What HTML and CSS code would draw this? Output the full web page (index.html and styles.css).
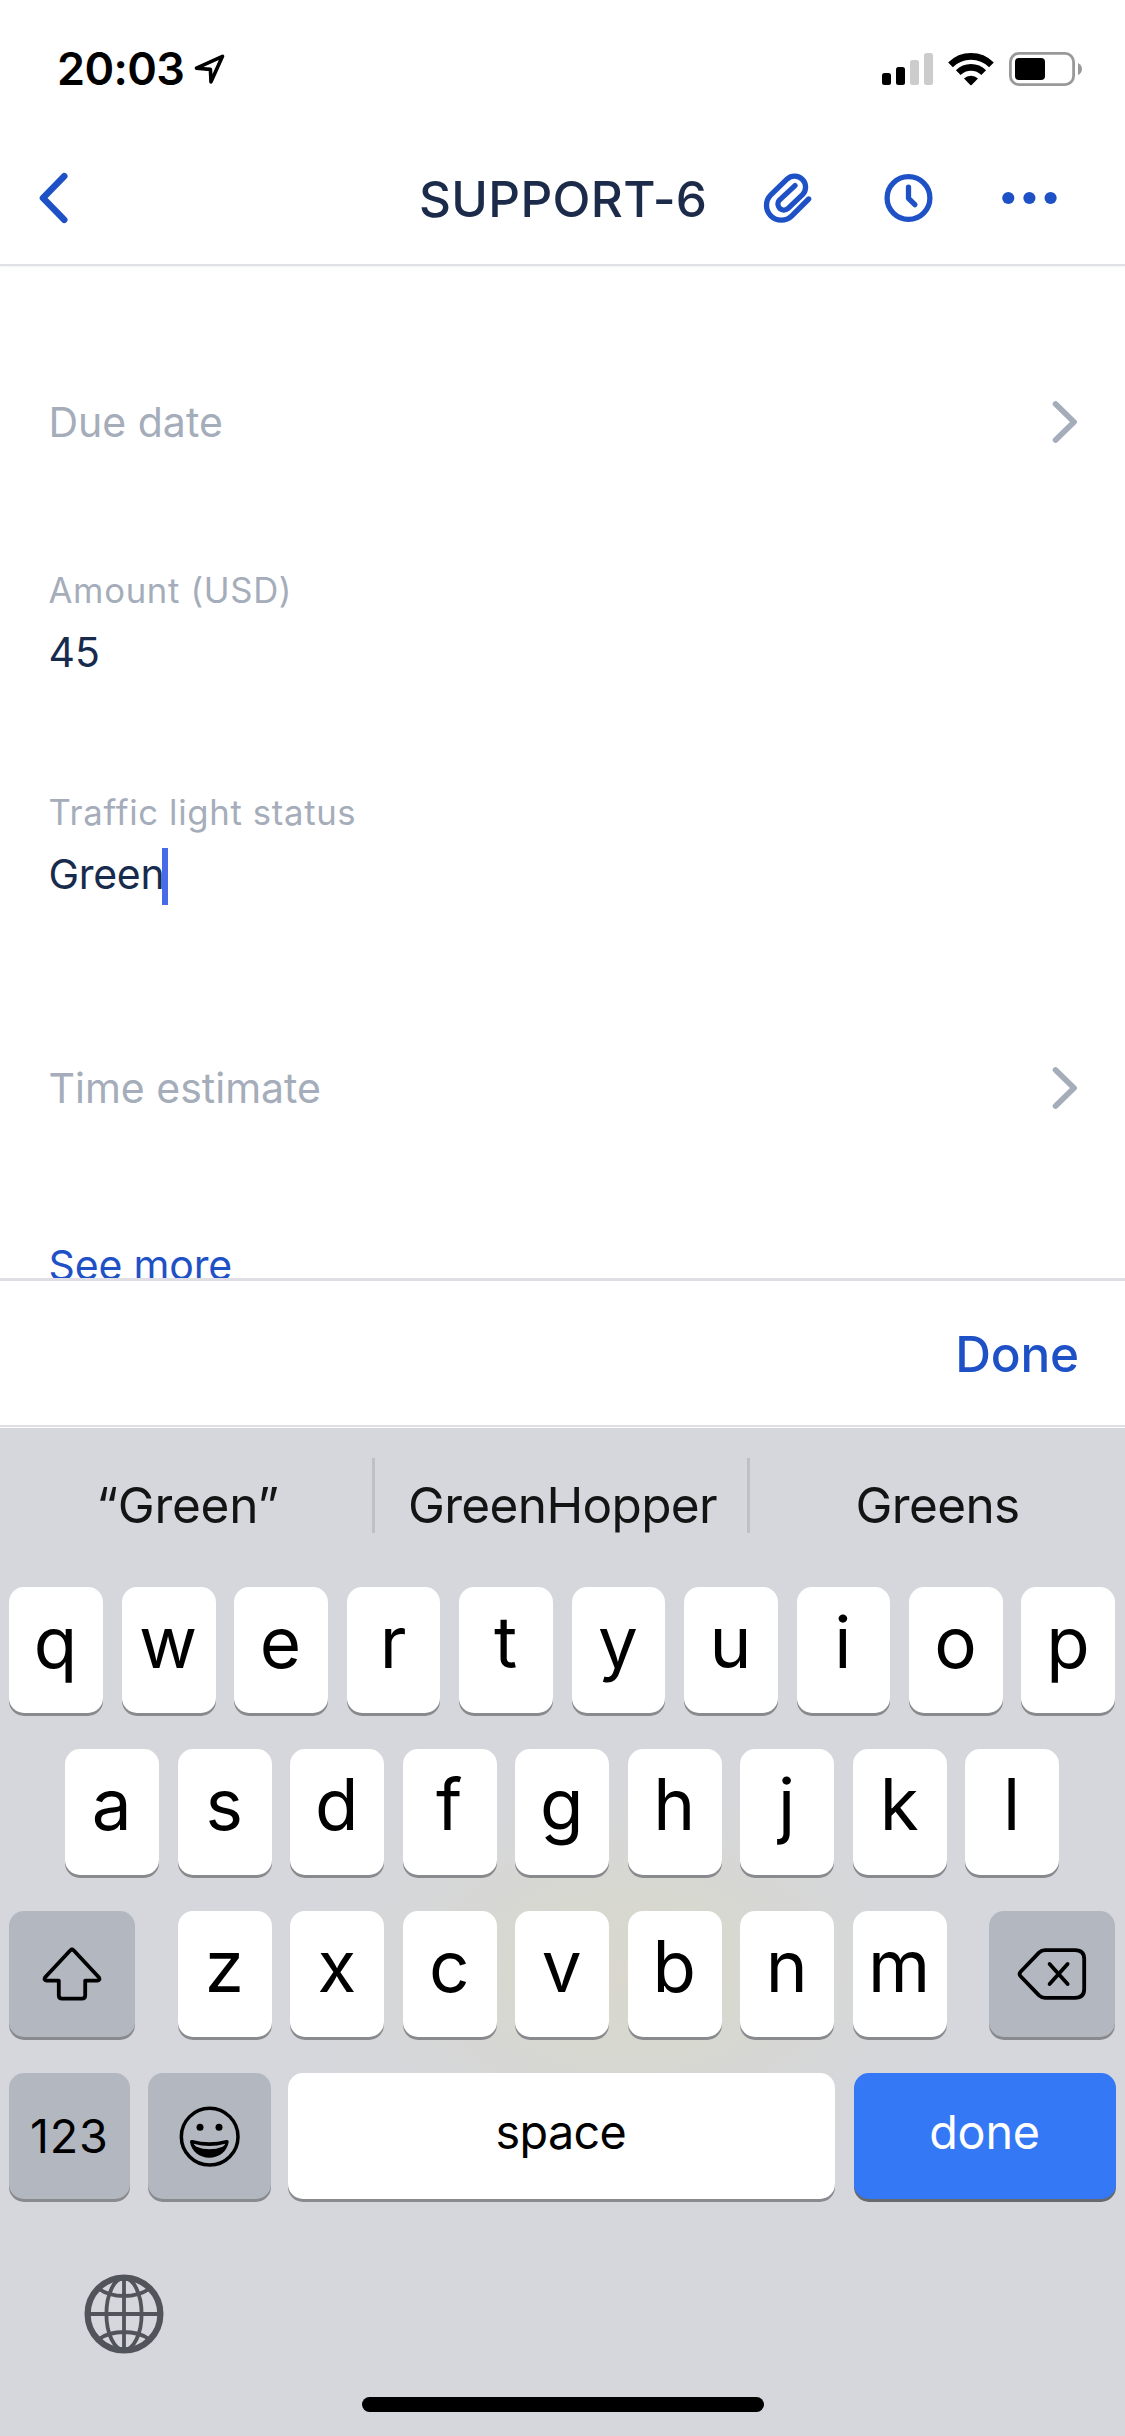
FILE: index.html
```html
<!DOCTYPE html>
<html lang="en">
<head>
<meta charset="utf-8">
<title>SUPPORT-6</title>
<link rel="stylesheet" href="styles.css">
</head>
<body>
<div class="screen">
  <header class="status-bar">
    <div class="status-left">
      <span class="clock">20:03</span>
      <svg class="location" width="32" height="30" viewBox="0 0 32 30"><path d="M2.5 14.2 28.5 2.3 17 27.8 16.4 15.4Z" fill="none" stroke="#000" stroke-width="3.6" stroke-linejoin="round"/></svg>
    </div>
    <div class="status-right">
      <svg width="51" height="34" viewBox="0 0 51 34">
        <rect x="0" y="21" width="9" height="12" rx="2.5"/><rect x="14" y="15" width="9" height="18" rx="2.5"/>
        <rect x="28" y="8" width="9" height="25" rx="2.5" fill="#ccc"/><rect x="42" y="1" width="9" height="32" rx="2.5" fill="#ccc"/>
      </svg>
      <svg class="wifi" width="46.3" height="34" viewBox="264 34 139 102">
        <g fill="none" stroke="#000" stroke-width="20"><path d="M271.5 72.5A87 87 0 0 1 394.5 72.5"/><path d="M294.8 95.8A54 54 0 0 1 371.2 95.8"/></g>
        <path d="M312 113.5A30 30 0 0 1 354 113.5L335 133Q333 135 331 133Z"/>
      </svg>
      <svg class="battery" width="73" height="34" viewBox="0 0 73 34">
        <rect x="1.4" y="1.4" width="63.2" height="31.2" rx="8.5" fill="none" stroke="#999" stroke-width="2.8"/>
        <rect x="6" y="6" width="30" height="22" rx="4"/><path d="M69 11Q73 13 73 17T69 23Z" fill="#999"/>
      </svg>
    </div>
  </header>

  <nav class="nav-bar">
    <svg class="back" width="30" height="52" viewBox="0 0 30 52"><path d="M26.2 4.2 5 26 26.2 47.8" fill="none" stroke="#1f51c6" stroke-width="6.6" stroke-linecap="round" stroke-linejoin="round"/></svg>
    <h1 class="title">SUPPORT-6</h1>
    <div class="actions">
      <svg width="52" height="56" viewBox="36 60 156 168"><path d="M176 147 125.5 197.5A44.5 44.5 0 0 1 62.5 134.5L111.7 86.7A33 33 0 0 1 158.3 133.3L113.7 175.7A18 18 0 0 1 88.3 150.3L135 107" fill="none" stroke="#1f51c6" stroke-width="16" stroke-linecap="round" stroke-linejoin="round"/></svg>
      <svg width="50" height="50" viewBox="0 0 50 50"><g fill="none" stroke="#1f51c6" stroke-width="5.3" stroke-linecap="round" stroke-linejoin="round"><circle cx="25.5" cy="25" r="21.4"/><path d="M25.5 14.2V25.3L31.9 31.7"/></g></svg>
      <svg width="55" height="14" viewBox="0 0 55 14" fill="#1f51c6"><circle cx="6.3" cy="7" r="6.1"/><circle cx="27.4" cy="7" r="6.1"/><circle cx="48.6" cy="7" r="6.1"/></svg>
    </div>
  </nav>

  <main class="fields">
    <div class="picker">
      <span class="placeholder">Due date</span>
      <svg width="26" height="44" viewBox="0 0 26 44"><path d="M3.6 4 22 22 3.6 40" fill="none" stroke="#a5adba" stroke-width="5.8" stroke-linecap="round" stroke-linejoin="round"/></svg>
    </div>
    <div class="field">
      <div class="label">Amount (USD)</div>
      <div class="value">45</div>
    </div>
    <div class="field">
      <div class="label">Traffic light status</div>
      <div class="value value-active">Green<i class="caret"></i></div>
    </div>
    <div class="picker">
      <span class="placeholder">Time estimate</span>
      <svg width="26" height="44" viewBox="0 0 26 44"><path d="M3.6 4 22 22 3.6 40" fill="none" stroke="#a5adba" stroke-width="5.8" stroke-linecap="round" stroke-linejoin="round"/></svg>
    </div>
    <a class="more">See more</a>
  </main>

  <div class="accessory"><span>Done</span></div>

  <section class="keyboard">
    <div class="suggestions">
      <span class="quoted">“Green”</span><span class="wide">GreenHopper</span><span class="wide">Greens</span>
    </div>
    <div class="keys">
      <div class="row"><b>q</b><b>w</b><b>e</b><b>r</b><b>t</b><b>y</b><b>u</b><b>i</b><b>o</b><b>p</b></div>
      <div class="row"><b>a</b><b>s</b><b>d</b><b>f</b><b>g</b><b>h</b><b>j</b><b>k</b><b>l</b></div>
      <div class="row row-edges">
        <b class="dark shift"><svg width="60" height="54" viewBox="0 0 60 54"><path d="M28.4 3.3Q30 1.7 31.6 3.3L56.8 30.2Q58.6 33.4 55.4 33.6H43.2V48.2Q43.2 51.6 39.8 51.6H20.2Q16.8 51.6 16.8 48.2V33.6H4.6Q1.4 33.4 3.2 30.2Z" fill="none" stroke="#000" stroke-width="3.8" stroke-linejoin="round"/></svg></b>
        <div class="row"><b>z</b><b>x</b><b>c</b><b>v</b><b>b</b><b>n</b><b>m</b></div>
        <b class="dark shift"><svg width="70" height="52" viewBox="0 0 70 52"><g fill="none" stroke="#000" stroke-width="3.8" stroke-linecap="round" stroke-linejoin="round"><path d="M3.6 23.8 22 4.6Q24.6 2.2 28 2.2H58Q67.2 2.2 67.2 11V41Q67.2 49.8 58 49.8H28Q24.6 49.8 22 47.4L3.6 28.2Q1.6 26 3.6 23.8Z"/><path d="M32.6 16 50.6 36M50.6 16 32.6 36"/></g></svg></b>
      </div>
      <div class="row row-bottom">
        <b class="dark numbers">123</b>
        <b class="dark emoji"><svg width="90" height="90" viewBox="0 0 270 270">
          <circle cx="134" cy="137" r="85" fill="none" stroke="#000" stroke-width="10.5"/><circle cx="105" cy="109" r="10.5"/><circle cx="162" cy="109" r="10.5"/>
          <path d="M75 153Q74 146 82 147 133 161 184 147 192 146 191 153C186 182 162 200 133 200S80 182 75 153Z"/><path d="M86 158Q133 172 181 158 179 162 173 167 133 182 94 167 88 163 86 158Z" fill="#b2b7c0"/></svg></b>
        <b class="space">space</b>
        <b class="done">done</b>
      </div>
    </div>
    <div class="globe">
      <svg width="80" height="80" viewBox="0 0 80 80"><g fill="none" stroke="#51555b" stroke-width="3.8"><circle cx="40" cy="40" r="36.4" stroke-width="6.2"/><path d="M40 4V76M4 40H76M15 15Q25 22 40 22T65 15M15 65Q25 58 40 58T65 65"/><ellipse cx="40" cy="40" rx="17.6" ry="36"/></g></svg>
    </div>
    <div class="home"></div>
  </section>
</div>
</body>
</html>
```
FILE: styles.css
```css
* { box-sizing: border-box; }
body { margin: 0; }
svg { display: block; flex: none; }

.screen {
  width: 1125px;
  height: 2436px;
  display: flex;
  flex-direction: column;
  overflow: hidden;
  background: #fff;
  font-family: Inter, "Liberation Sans", sans-serif;
}

/* Status bar */
.status-bar {
  height: 132px;
  padding: 0 43px 0 57px;
  display: flex;
  justify-content: space-between;
  align-items: center;
}
.status-left, .status-right {
  display: flex;
  align-items: center;
  padding-top: 6px;
}
.clock { font-size: 45px; font-weight: 600; letter-spacing: -0.6px; line-height: 54px; }
.location { margin-left: 10px; }
.wifi { margin-left: 15px; }
.battery { margin-left: 15px; }

/* Navigation */
.nav-bar {
  height: 134px;
  padding: 0 68px 0 38px;
  display: grid;
  grid-template-columns: 381px 1fr auto;
  align-items: center;
  border-bottom: 2px solid #dfe1e6;
  box-shadow: 0 1px 2px rgba(9, 30, 66, 0.06);
}
.title {
  margin: 2px 0 0;
  font-size: 49.5px;
  font-weight: 480;
  line-height: 60px;
  letter-spacing: 0.35px;
  color: #1c2b4a;
}
.actions { display: flex; align-items: center; gap: 69px; }

/* Issue fields */
.fields {
  height: 1012px;
  padding: 96px 47px 0 48.5px;
  overflow: hidden;
  font-size: 41px;
}
.picker {
  height: 120px;
  display: flex;
  align-items: center;
  justify-content: space-between;
  color: #a5adba;
}
.field { margin-top: 84px; }
.field + .field { margin-top: 108px; }
.label { font-size: 34.7px; line-height: 48px; letter-spacing: 0.67px; color: #a5adba; }
.value { margin-top: 10px; height: 56px; display: flex; align-items: center; color: #172b4d; }
.value-active { letter-spacing: -0.3px; }
.caret { width: 6px; height: 57px; margin: 5px 0 0 -2px; background: #4a6be8; }
.field + .picker { margin-top: 126px; }
.more { display: block; margin-top: 88px; line-height: 58px; letter-spacing: -0.15px; color: #1f51c6; }

/* Bar above the keyboard */
.accessory {
  height: 149px;
  padding: 1px 46px 0 0;
  display: flex;
  justify-content: flex-end;
  align-items: center;
  border-top: 3px solid #dedee4;
  border-bottom: 2px solid #dedee4;
  font-size: 49.5px;
  font-weight: 480;
  letter-spacing: -0.2px;
  color: #1f51c6;
}

/* Keyboard */
.keyboard {
  height: 1008px;
  margin-top: 1px;
  display: flex;
  flex-direction: column;
  background:
    radial-gradient(ellipse 330px 220px at 630px 545px, #d9d7ce 0%, rgba(215, 216, 206, 0.9) 35%, rgba(214, 215, 212, 0.5) 70%, rgba(214, 215, 220, 0) 100%),
    #d6d7dc;
}
.suggestions {
  display: grid;
  grid-template-columns: 375px 375px 375px;
  padding: 30px 0 54px;
  font-size: 49.5px;
  letter-spacing: -0.25px;
  color: #141414;
}
.suggestions span {
  height: 75px;
  padding: 19px 0 0 3px;
  display: flex;
  align-items: center;
  justify-content: center;
  border-right: 3px solid #bfc0c6;
}
.suggestions span:last-child { border-right-color: transparent; }
.suggestions .wide { letter-spacing: -0.65px; }

.keys { display: flex; flex-direction: column; gap: 36px; padding: 0 9.5px 0 9px; }
.row { display: flex; justify-content: center; gap: 18.6px; }
.row-edges { justify-content: space-between; }
.row b {
  width: 93.9px;
  height: 126px;
  padding: 0 1px 15.6px 0;
  display: flex;
  align-items: center;
  justify-content: center;
  border-radius: 15px;
  background: #fff;
  box-shadow: 0 3px 0 #898a8d;
  font-size: 71px;
  font-weight: 380;
  color: #000;
}
.row .dark { background: #b2b7c0; padding: 0; }
.row .shift { width: 126px; }
.row .numbers { width: 120.5px; font-size: 46.7px; font-weight: 400; letter-spacing: 0.7px; }
.row .emoji { width: 123px; }
.row .space { flex: 1; margin-left: -2px; padding-bottom: 9px; font-size: 46.7px; font-weight: 400; letter-spacing: -0.6px; }
.row .done { width: 262px; padding: 0 0 9px; background: #3478f6; color: #fff; font-size: 46.7px; font-weight: 400; letter-spacing: -0.2px; box-shadow: 0 3px 0 #66696f; }

.globe { margin: 75px 0 0 83.5px; }
.home { width: 402px; height: 15px; margin: 43px auto 0; border-radius: 8px; background: #000; }
```
